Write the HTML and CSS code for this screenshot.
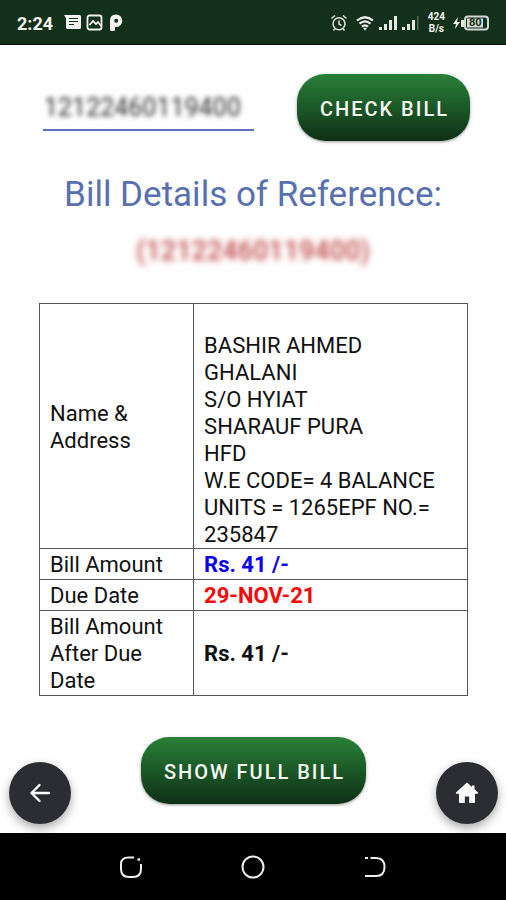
FILE: index.html
```html
<!DOCTYPE html>
<html lang="en">
<head>
<meta charset="utf-8">
<meta name="viewport" content="width=device-width, initial-scale=1">
<title>Bill Details</title>
<link rel="stylesheet" href="styles.css">
</head>
<body>
<header class="status">
  <div class="status-left">
    <span class="clock">2:24</span>
    <svg width="18" height="18" viewBox="0 0 18 18"><path fill="#f4f4f0" d="M0 1h15.500q1.500 0 1.500 1.500v11q0 1.500-1.500 1.500h-12Q2 15 2 13.500V4z"/><path stroke="#13301a" stroke-width="1.200" d="M5 4.500h9M5 7.500h9M5 10.500h5"/></svg>
    <svg width="18" height="18" viewBox="0 0 18 18" fill="none" stroke="#f4f4f0"><rect x="1.500" y="1.500" width="14" height="14" rx="2" stroke-width="1.800"/><path stroke-width="1.800" d="M3.500 11l3.500-4 3 3 2-2 3 4"/></svg>
    <svg width="16" height="18" viewBox="0 0 16 18"><path fill="#f4f4f0" fill-rule="evenodd" d="M8 .5a6.300 6.300 0 1 1 0 12.600H7v2.400q0 1.500-1.500 1.500h-2Q2 17 2 15.500V6.500Q2 .5 8 .5zM8.200 4.800a2 2 0 1 0 0 4 2 2 0 0 0 0-4z"/></svg>
  </div>
  <div class="status-right">
    <svg width="18" height="18" viewBox="0 0 18 18" fill="none" stroke="#d8ddd8" stroke-width="1.600"><circle cx="9" cy="9.800" r="6"/><path d="M1.500 4.500l3.500-3M16.500 4.500l-3.500-3M9 6.500v3.500l2.500 1.500M5 14.500l-1.500 2M13 14.500l1.500 2"/></svg>
    <svg class="wifi" width="18" height="18" viewBox="0 0 18 18" fill="none" stroke="#ecf0ec" stroke-width="2.200"><path d="M1 6.500q8-6.500 16 0M3.500 9.700q5.500-4.500 11 0M6 12.600q3-2.500 6 0"/><path fill="#ecf0ec" stroke="none" d="M7 13.800h4l-2 3z"/></svg>
    <svg width="42" height="18" viewBox="0 0 42 18" fill="#e4e8e4"><path d="M1 13h3v3H1zM6 10h3v6H6zM11 6h3v10h-3zM16 2h3v14h-3zM24 13h3v3h-3zM29 10h3v6h-3zM34 6h3v10h-3z"/><path fill="#526b57" d="M39 2h1.500v14H39z"/></svg>
    <span class="speed"><span>424</span><span>B/s</span></span>
    <span class="power">
      <svg width="37" height="18" viewBox="0 0 37 18"><path fill="#f0f0ec" d="M5 3L0 10h3l-1 5 5-7H4z"/><path fill="#e4e8e4" d="M8 6h3v7H8z"/><rect x="12" y="2.500" width="23" height="13" rx="3" fill="none" stroke="#d4d8d4" stroke-width="2"/><rect x="14" y="4.500" width="16" height="9" fill="#d4d8d4"/></svg>
      <span class="level">80</span>
    </span>
  </div>
</header>

<main class="page">
  <form class="lookup">
    <input class="reference" type="text" aria-label="Reference number" value="12122460119400">
    <button class="pill" type="button">CHECK BILL</button>
  </form>

  <h1 class="title">Bill Details of Reference:</h1>
  <p class="number">(12122460119400)</p>

  <table class="bill">
    <tbody>
      <tr><th scope="row">Name &amp; Address</th><td class="address">BASHIR AHMED<br>GHALANI<br>S/O HYIAT<br>SHARAUF PURA<br>HFD<br>W.E CODE= 4 BALANCE UNITS = 1265EPF NO.= 235847</td></tr>
      <tr><th scope="row">Bill Amount</th><td class="amount">Rs. 41 /-</td></tr>
      <tr><th scope="row">Due Date</th><td class="due">29-NOV-21</td></tr>
      <tr><th scope="row">Bill Amount After Due Date</th><td class="late">Rs. 41 /-</td></tr>
    </tbody>
  </table>

  <div class="actions">
    <button class="fab" type="button" aria-label="Back">
      <svg width="24" height="24" viewBox="0 0 24 24" fill="none" stroke="#fff" stroke-width="2.400" stroke-linecap="round" stroke-linejoin="round"><path d="M21 12H4M11.500 4L3.500 12l8 8"/></svg>
    </button>
    <button class="pill show" type="button">SHOW FULL BILL</button>
    <button class="fab" type="button" aria-label="Home">
      <svg width="24" height="24" viewBox="0 0 24 24" fill="#fff"><path d="M12 1.500L1 11.500q-.6 1 .6 1.200H4V21q0 1 1 1h4.800v-6.500h4.400V22H19q1 0 1-1v-8.300h2.400q1.200-.2.600-1.200l-3.500-3.200V4.500H17v1.600z"/></svg>
    </button>
  </div>
</main>

<nav class="system">
  <button type="button" aria-label="Recent apps"><svg width="24" height="24" viewBox="0 0 24 24" fill="none" stroke="#eee" stroke-width="2"><path d="M15 2.500H9.500Q2 2.500 2 9v5q0 8 8 8h4q8 0 8-8V9"/><path stroke-width="2.500" d="M18.500 4.500H21"/></svg></button>
  <button type="button" aria-label="Home screen"><svg width="24" height="24" viewBox="0 0 24 24" fill="none" stroke="#eee" stroke-width="2"><circle cx="12" cy="12" r="10.500"/></svg></button>
  <button type="button" aria-label="Previous screen"><svg width="24" height="24" viewBox="0 0 24 24" fill="none" stroke="#eee" stroke-width="2"><path d="M7.500 3H13q8.500 0 8.500 9T13 21H2M2 3h3"/></svg></button>
</nav>
</body>
</html>
```

FILE: styles.css
```css
* { box-sizing: border-box; }

body {
  margin: 0;
  min-height: 100vh;
  display: flex;
  flex-direction: column;
  background: #fefefe;
  color: #111;
  font-family: Roboto, "Liberation Sans", sans-serif;
}

svg { display: block; flex: none; }

button { border: 0; font-family: inherit; cursor: pointer; }

.status {
  height: 45px;
  padding: 2px 16px 0 17px;
  display: flex;
  align-items: center;
  justify-content: space-between;
  background: #13301a;
  border-bottom: 1px solid #060f08;
  color: #f4f4f0;
}

.status-left { display: flex; align-items: center; gap: 4px; }
.clock { font-size: 18px; font-weight: 700; margin-right: 7px; }
.status-right { display: flex; align-items: center; gap: 4px; }
.wifi { margin-left: 4px; }

.speed {
  display: flex;
  flex-direction: column;
  align-items: center;
  margin: 0 4px;
  font-size: 10px;
  line-height: 12px;
  font-weight: 700;
}

.power { position: relative; }
.level {
  position: absolute;
  top: 3px;
  left: 16px;
  color: #13301a;
  font-size: 11px;
  line-height: 12px;
  font-weight: 700;
}

.page { flex: 1; display: flex; flex-direction: column; }

.lookup {
  display: flex;
  align-items: flex-start;
  gap: 43px;
  padding: 29px 36px 0 43px;
}

.reference {
  flex: 1;
  min-width: 0;
  height: 57px;
  padding: 11px 1px 0;
  border: 0;
  border-bottom: 2px solid #5b75b8;
  background: none;
  color: transparent;
  text-shadow: 0 0 5px #333;
  font-family: inherit;
  font-size: 25px;
}

.pill {
  height: 67px;
  padding: 2px 21px 0 23px;
  border-radius: 28px;
  background: linear-gradient(#298038, #0e2f17);
  box-shadow: 0 1px 3px #0006;
  color: #f6f8f3;
  font-size: 20px;
  font-weight: 500;
  letter-spacing: 2px;
  white-space: nowrap;
}

.title {
  margin: 32px 0 0;
  color: #5870b0;
  font-size: 35px;
  line-height: 44px;
  font-weight: 400;
  text-align: center;
}

.number {
  margin: 17px 0 0;
  color: transparent;
  text-shadow: 0 0 6px #c04848;
  font-size: 27px;
  line-height: 34px;
  font-weight: 500;
  text-align: center;
}

.bill {
  margin: 35px 38px 0 39px;
  border-collapse: collapse;
  table-layout: fixed;
  font-size: 22px;
  line-height: 27px;
}

.bill th, .bill td {
  padding: 2px 10px 1px;
  border: 1px solid #555;
  font-weight: 400;
  text-align: left;
  vertical-align: middle;
}

.bill th { width: 36%; }
.bill .address { padding-top: 28px; padding-bottom: 0; }
.bill .amount { color: #0d00ee; font-weight: 700; }
.bill .due { color: #f80808; font-weight: 700; }
.bill .late { font-weight: 700; }

.actions {
  margin-top: auto;
  padding: 0 8px 9px 9px;
  display: flex;
  align-items: flex-end;
  justify-content: space-between;
}

.fab {
  width: 62px;
  height: 62px;
  padding: 0;
  border-radius: 50%;
  display: grid;
  place-items: center;
  background: #2b2d33;
  box-shadow: 0 4px 10px #0005;
}

.show { margin-bottom: 20px; }

.system {
  height: 67px;
  display: flex;
  align-items: center;
  justify-content: center;
  gap: 98px;
  background: #000;
}

.system button { padding: 0; background: none; }
```
